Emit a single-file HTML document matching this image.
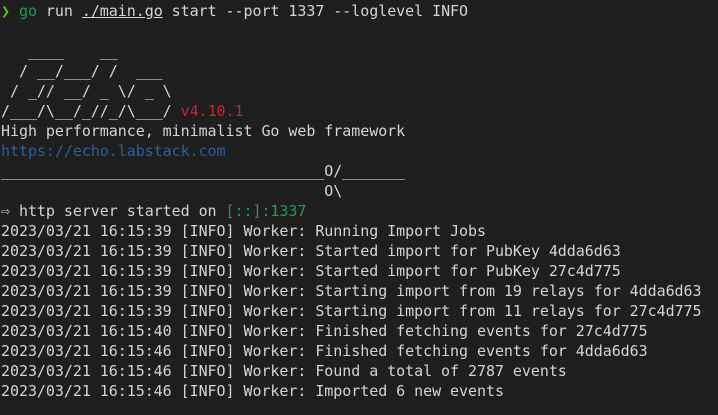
<!DOCTYPE html>
<html><head><meta charset="utf-8"><style>
html,body{margin:0;padding:0;background:#1e1e1e;width:718px;height:415px;overflow:hidden}
pre{margin:0;padding:1px 0 0 1px;font-family:"DejaVu Sans Mono","Liberation Mono",monospace;font-size:15px;letter-spacing:-0.05px;line-height:20px;color:#d4d4d4;white-space:pre}
.p{color:#4fc314}.g{color:#1f9e58}.r{color:#c4262e}.b{color:#2d5f9e}.gr{color:#1f9e58}
u{text-decoration:underline}
</style></head><body><pre><span class="p">❯</span> <span class="g">go</span> run <u>./main.go</u> start --port 1337 --loglevel INFO

   ____    __
  / __/___/ /  ___
 / _// __/ _ \/ _ \
/___/\__/_//_/\___/ <span class="r">v4.10.1</span>
High performance, minimalist Go web framework
<span class="b">https://echo.labstack.com</span>
____________________________________O/_______
                                    O\
⇨ http server started on <span class="gr">[::]:1337</span>
2023/03/21 16:15:39 [INFO] Worker: Running Import Jobs
2023/03/21 16:15:39 [INFO] Worker: Started import for PubKey 4dda6d63
2023/03/21 16:15:39 [INFO] Worker: Started import for PubKey 27c4d775
2023/03/21 16:15:39 [INFO] Worker: Starting import from 19 relays for 4dda6d63
2023/03/21 16:15:39 [INFO] Worker: Starting import from 11 relays for 27c4d775
2023/03/21 16:15:40 [INFO] Worker: Finished fetching events for 27c4d775
2023/03/21 16:15:46 [INFO] Worker: Finished fetching events for 4dda6d63
2023/03/21 16:15:46 [INFO] Worker: Found a total of 2787 events
2023/03/21 16:15:46 [INFO] Worker: Imported 6 new events</pre></body></html>
